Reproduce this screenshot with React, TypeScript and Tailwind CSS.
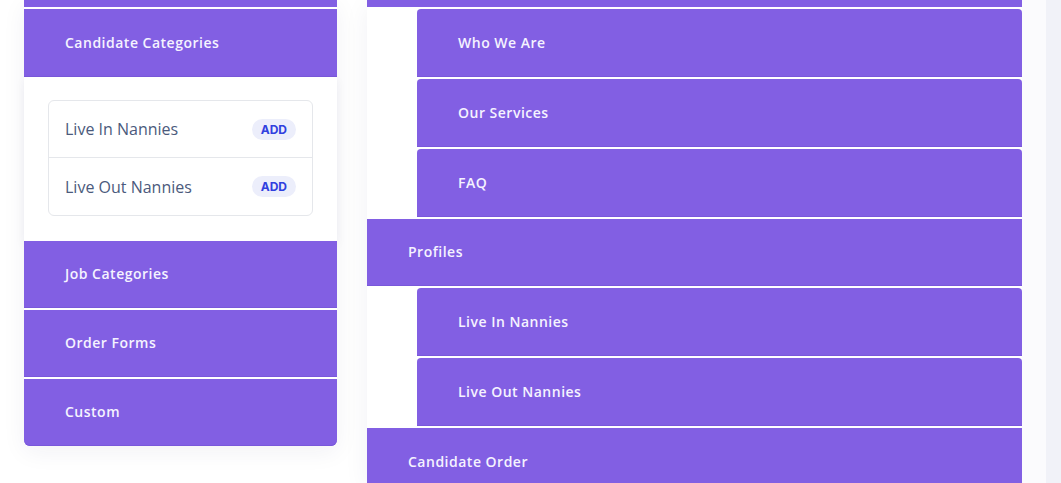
const font = { fontFamily: '"Open Sans", "Liberation Sans", sans-serif' };

function Bar({ label, className = "" }: { label: string; className?: string }) {
  return (
    <div
      className={`flex shrink-0 items-center bg-[#825fe3] pb-[2px] pl-[41px] text-[14px] font-semibold tracking-[0.5px] text-[#f5f3ff] shadow-[inset_0_-1px_0_#7958da] ${className}`}
    >
      {label}
    </div>
  );
}

function Row({ label, last }: { label: string; last?: boolean }) {
  return (
    <div className={`flex h-[57px] items-center justify-between pl-4 pr-4 ${last ? "" : "border-b border-[#e5e7eb]"}`}>
      <span className="text-[16px] text-[#4b5a7c]">{label}</span>
      <span
        className="rounded-full bg-[#eceefb] px-[9px] py-[3px] text-[12px] font-bold leading-[15px] text-[#3040df]"
        style={{ fontFamily: 'Inter, "Liberation Sans", sans-serif' }}
      >
        ADD
      </span>
    </div>
  );
}

export default function App() {
  return (
    <div className="flex h-[483px] w-[1061px] overflow-hidden bg-white" style={font}>
      <div className="w-[24px] shrink-0" />
      <div className="flex w-[313px] shrink-0 flex-col gap-[2px] self-start rounded-b-[6px] shadow-[0_6px_24px_rgba(30,40,90,0.06)]">
        <div className="h-[7px] shrink-0 bg-[#825fe3]" />
        <Bar label="Candidate Categories" className="h-[68px]" />
        <div className="-mt-[2px] h-[164px] shrink-0 bg-white px-6 pt-[23px] shadow-[0_4px_10px_rgba(30,40,90,0.05)]">
          <div className="rounded-[6px] border border-[#e5e7eb] bg-white">
            <Row label="Live In Nannies" />
            <Row label="Live Out Nannies" last />
          </div>
        </div>
        <Bar label="Job Categories" className="-mt-[2px] h-[67px]" />
        <Bar label="Order Forms" className="h-[67px]" />
        <Bar label="Custom" className="h-[67px] rounded-b-[6px]" />
      </div>
      <div className="w-[30px] shrink-0" />
      <div className="flex w-[655px] shrink-0 flex-col gap-[2px] shadow-[0_6px_24px_rgba(30,40,90,0.06)]">
        <div className="h-[7px] shrink-0 bg-[#825fe3]" />
        <Bar label="Who We Are" className="ml-[50px] h-[68px] rounded-t-[4px]" />
        <Bar label="Our Services" className="ml-[50px] h-[68px] rounded-t-[4px]" />
        <Bar label="FAQ" className="ml-[50px] h-[68px] rounded-t-[4px]" />
        <Bar label="Profiles" className="h-[67px]" />
        <Bar label="Live In Nannies" className="ml-[50px] h-[68px] rounded-t-[4px]" />
        <Bar label="Live Out Nannies" className="ml-[50px] h-[68px] rounded-t-[4px]" />
        <Bar label="Candidate Order" className="h-[68px]" />
      </div>
      <div className="w-[24px] shrink-0 bg-[#fbfbfd]" />
      <div className="flex-1 bg-[#f1f2f8]" />
    </div>
  );
}
